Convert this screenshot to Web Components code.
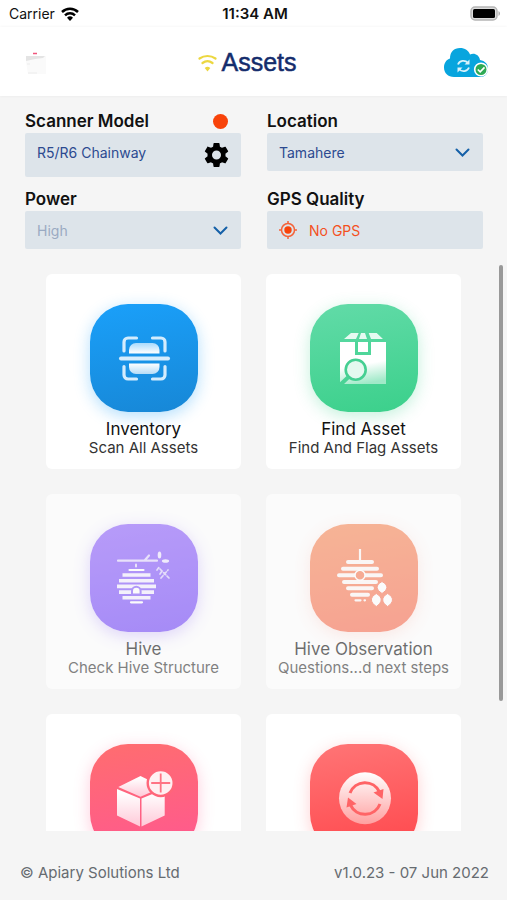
<!DOCTYPE html>
<html lang="en">
<head>
<meta charset="utf-8">
<meta name="viewport" content="width=device-width, initial-scale=1">
<title>Assets</title>
<style>
  html, body {
    height: 100%;
    margin: 0;
  }
  body {
    font-family: Inter, "Liberation Sans", sans-serif;
    color: #111;
    background: #f5f5f5;
    --field: #dde4ea;
    --navy: #2c4a90;
    --alert: #f4511e;
  }
</style>
</head>
<body>
<assets-app>
  <status-bar slot="top" carrier="Carrier" time="11:34 AM"></status-bar>
  <app-header slot="top" heading="Assets"></app-header>

  <scanner-field slot="settings" label="Scanner Model" value="R5/R6 Chainway"></scanner-field>
  <select-field slot="settings" label="Location" options="Tamahere"></select-field>
  <select-field slot="settings" label="Power" options="High,Medium,Low" disabled></select-field>
  <gps-field slot="settings" label="GPS Quality" value="No GPS"></gps-field>

  <menu-tile heading="Inventory" text="Scan All Assets" style="--from:#1aa0fa;--to:#1787d6;--glow:#1aa0fa55">
    <svg viewBox="0 0 108 108">
      <defs>
        <linearGradient id="g-scan" x2="0" y2="1"><stop stop-color="#a9dafc"/><stop offset="1" stop-color="#fff"/></linearGradient>
        <linearGradient id="g-scan2" x2="0" y2="1"><stop stop-color="#fff"/><stop offset="1" stop-color="#b5dcf7"/></linearGradient>
      </defs>
      <g fill="none" stroke="#d3ecfd" stroke-width="3.2" stroke-linecap="round" stroke-linejoin="round">
        <path d="M34 47V38a4 4 0 0 1 4-4h8.500M62.500 34H71a4 4 0 0 1 4 4v9M34 62.500V71a4 4 0 0 0 4 4h8.500M62.500 75H71a4 4 0 0 0 4-4v-8.500"/>
      </g>
      <path fill="url(#g-scan)" d="M39 49.500V46a7 7 0 0 1 7-7h16.500a7 7 0 0 1 7 7v3.500z"/>
      <path fill="url(#g-scan2)" d="M39 59.500h30.500V63a7 7 0 0 1-7 7H46a7 7 0 0 1-7-7z"/>
      <rect x="29" y="52.500" width="51" height="4" rx="2" fill="#d6edfd"/>
    </svg>
  </menu-tile>

  <menu-tile heading="Find Asset" text="Find And Flag Assets" style="--from:#62dba8;--to:#3bd08b;--glow:#3bd08b4d">
    <svg viewBox="0 0 108 108">
      <defs>
        <linearGradient id="g-find" x1="0.300" y1="0" x2="0.500" y2="1"><stop offset="0.550" stop-color="#fff"/><stop offset="1" stop-color="#a0e9c8"/></linearGradient>
      </defs>
      <path fill="#e6faf1" d="M34 35l7-6h7.700l-2.700 6zM49 35l2-6h4l2 6zM61 35l-2.300-6h8l6.300 6z"/>
      <path fill="url(#g-find)" d="M30 38h46v42H30z"/>
      <path fill="none" stroke="#4fd69a" stroke-width="3" d="M46.500 37v12.500h13V37"/>
      <circle cx="45.700" cy="65.700" r="10" fill="#e4f9ef" stroke="#45cf92" stroke-width="2.600"/>
      <path stroke="#4ad295" stroke-width="4" d="M38.500 73l-8.500 8"/>
    </svg>
  </menu-tile>

  <menu-tile heading="Hive" text="Check Hive Structure" disabled style="--from:#8f61fc;--to:#7145f8;--glow:#7145f855">
    <svg viewBox="0 0 108 108">
      <g stroke="#fff" stroke-linecap="round" fill="none">
        <path stroke-width="2.200" opacity=".75" d="M28 36.700h39M55 36l4-4.500"/>
        <path stroke-width="2" d="M46 40.500v2" opacity=".8"/>
        <path stroke-width="2.200" d="M39.500 46h14M41 78.300h11"/>
        <path stroke-width="3.600" stroke-linecap="butt" opacity=".9" d="M32.500 51h28M29 56.700h35M27 62.400h39M29 68.100h35M32.500 73.700h28"/>
        <path stroke-width="1.700" stroke-dasharray="3 2" opacity=".7" d="M67 46l3-4M70 50l2-3M70 45l9 9M71 54l7-8"/>
      </g>
      <path fill="#fff" stroke="#8259fa" stroke-width="2" d="M42 70.500V67a4.300 4.300 0 0 1 8.600 0v3.500z"/>
      <ellipse cx="69.500" cy="31" rx="1.800" ry="3.600" fill="#fff" opacity=".85"/>
      <ellipse cx="75.500" cy="37" rx="3.600" ry="1.800" fill="#fff" opacity=".85"/>
    </svg>
  </menu-tile>

  <menu-tile heading="Hive Observation" text="Questions...d next steps" disabled style="--from:#f88a58;--to:#f86b50;--glow:#f86b5033">
    <svg viewBox="0 0 108 108">
      <g stroke="#fff" fill="none" opacity=".95">
        <path stroke-width="2.200" d="M50 25v12"/>
        <path stroke-width="4" stroke-linecap="round" d="M38 38h24M33 44.700h34M29 51.300h42M34 58h32M38 64.300h24M42 70.700h16"/>
        <path stroke-width="2.200" stroke-linecap="round" d="M45.500 76.300h5M54.500 76.300h.500"/>
      </g>
      <circle cx="50" cy="51.300" r="5" fill="#f87b54" stroke="#fff" stroke-width="1.500"/>
      <g fill="#fff" stroke="#f87052" stroke-width="1">
        <path d="M72 57.500c7 4 6 8 0 12-6-4-7-8 0-12z"/>
        <path d="M66.300 69.500c7 4 6 9 0 13-6-4-7-9 0-13z"/>
        <path d="M77.600 69.500c7 4 6 9 0 13-6-4-7-9 0-13z"/>
      </g>
    </svg>
  </menu-tile>

  <menu-tile aria-label="Add asset" style="--from:#ff6d6f;--to:#ff5890;--glow:#ff58904d">
    <svg viewBox="0 0 108 108">
      <defs>
        <linearGradient id="g-add" x2="0" y2="1"><stop offset="0.100" stop-color="#fff"/><stop offset="1" stop-color="#ffc9d8"/></linearGradient>
      </defs>
      <path fill="url(#g-add)" d="M28.300 43l22.200-11 22.200 11-22.200 9.700z"/>
      <path fill="url(#g-add)" d="M27 45l23 9.600v28L27 71.400zM51.500 54.600l23.200-9.600v26.400l-23.200 11.200z"/>
      <circle cx="70.700" cy="39" r="13" fill="#fff0f2" stroke="#ff6679" stroke-width="2.400"/>
      <path stroke="#ff7484" stroke-width="1.800" d="M70.700 29.500v19M61.200 39h19"/>
    </svg>
  </menu-tile>

  <menu-tile aria-label="Sync" style="--from:#ff7576;--to:#ff474c;--glow:#ff474c40">
    <svg viewBox="0 0 108 108">
      <defs>
        <linearGradient id="g-sync" x2="0" y2="1"><stop stop-color="#fff"/><stop offset="1" stop-color="#ffa0a0"/></linearGradient>
      </defs>
      <circle cx="55" cy="54.300" r="26" fill="url(#g-sync)"/>
      <path fill="none" stroke="#ff6466" stroke-width="3" d="M40 49a16 16 0 0 1 29.500-1M70 60a16 16 0 0 1-29.500 1"/>
      <path fill="#ff6466" d="M63.500 48.500l10-3.500-1 10zM46.500 60l-10 3.500 1.500-10z"/>
    </svg>
  </menu-tile>

  <app-footer slot="bottom"><span>© Apiary Solutions Ltd</span><span>v1.0.23 - 07 Jun 2022</span></app-footer>
</assets-app>

<script>
// clone a template into an open shadow root
function render(host, html) {
  const template = document.createElement("template")
  template.innerHTML = html
  host.attachShadow({ mode: "open" }).appendChild(template.content.cloneNode(true))
}

// label + box styles shared by the settings fields
const fieldStyle = `
  :host {
    display: block;
    min-width: 0;
  }
  .head {
    display: flex;
    align-items: center;
    justify-content: space-between;
    height: 24px;
    font-size: 17px;
    font-weight: 600;
  }
  .box {
    display: flex;
    align-items: center;
    box-sizing: border-box;
    height: 38px;
    padding: 0 12px;
    border-radius: 2px;
    background: var(--field);
    font-size: 14px;
    color: var(--navy);
  }
`

class AssetsApp extends HTMLElement {
  constructor() {
    super()
    render(this, `
      <style>
        :host {
          display: flex;
          flex-direction: column;
          height: 100%;
        }
        .settings {
          display: grid;
          grid-template-columns: 1fr 1fr;
          gap: 10px 26px;
          padding: 13px 24px 16px 25px;
        }
        .menu {
          position: relative;
          flex: 1;
          min-height: 0;
        }
        .scroll {
          box-sizing: border-box;
          height: 100%;
          overflow-y: auto;
          scrollbar-width: none;
          padding: 9px 46px;
        }
        .grid {
          display: grid;
          grid-template-columns: 1fr 1fr;
          gap: 25px;
        }
        .thumb {
          position: absolute;
          top: 0;
          right: 4px;
          width: 4px;
          height: 77%;
          border-radius: 2px;
          background: #999;
        }
      </style>
      <slot name="top"></slot>
      <section class="settings"><slot name="settings"></slot></section>
      <main class="menu">
        <div class="scroll"><div class="grid"><slot></slot></div></div>
        <div class="thumb"></div>
      </main>
      <slot name="bottom"></slot>
    `)
  }

  connectedCallback() {
    const scroll = this.shadowRoot.querySelector(".scroll")
    const thumb = this.shadowRoot.querySelector(".thumb")
    scroll.addEventListener("scroll", () => {
      const range = scroll.scrollHeight - scroll.clientHeight
      const room = scroll.clientHeight - thumb.offsetHeight
      thumb.style.top = Math.round(scroll.scrollTop / range * room) + "px"
    })
  }
}
customElements.define("assets-app", AssetsApp)

class StatusBar extends HTMLElement {
  constructor() {
    super()
    render(this, `
      <style>
        :host {
          display: grid;
          grid-template-columns: 1fr auto 1fr;
          align-items: center;
          height: 27px;
          padding: 0 6px 0 9px;
          background: #fff;
          font-size: 14px;
        }
        .left {
          display: flex;
          align-items: center;
          gap: 6px;
        }
        .time {
          font-size: 15px;
          font-weight: 600;
        }
        .battery {
          justify-self: end;
        }
        svg {
          display: block;
        }
      </style>
      <div class="left">
        <span class="carrier"></span>
        <svg width="18" height="14" viewBox="0 0 18 14">
          <g fill="none" stroke="#000" stroke-width="2.500"><path d="M1 5a11.500 11.500 0 0 1 16 0M4 8.300a7.300 7.300 0 0 1 10 0"/></g>
          <path d="M9 14l-3-3.300a4.500 4.500 0 0 1 6 0z"/>
        </svg>
      </div>
      <span class="time"></span>
      <svg class="battery" width="31" height="15" viewBox="0 0 31 15">
        <rect x="1" y="1" width="26" height="13" rx="4" fill="#ddd" stroke="#b5b5b5" stroke-width="1.500"/>
        <rect x="3" y="3" width="22" height="9" rx="1.500"/>
        <path d="M28.500 5c2 1 2 4 0 5z" fill="#aaa"/>
      </svg>
    `)
  }

  connectedCallback() {
    this.shadowRoot.querySelector(".carrier").textContent = this.getAttribute("carrier")
    this.shadowRoot.querySelector(".time").textContent = this.getAttribute("time")
  }
}
customElements.define("status-bar", StatusBar)

class AppHeader extends HTMLElement {
  constructor() {
    super()
    render(this, `
      <style>
        :host {
          display: grid;
          grid-template-columns: 1fr auto 1fr;
          align-items: center;
          height: 67px;
          padding: 2px 18px 0 24px;
          background: #fff;
          box-shadow: 0 0 3px #0000000f;
        }
        h1 {
          display: flex;
          align-items: center;
          gap: 4px;
          margin: 0 18px 0 0;
          font: 25px "Liberation Sans", Arial, sans-serif;
          color: #142c6c;
          -webkit-text-stroke: 0.5px #142c6c;
        }
        button {
          justify-self: end;
          padding: 0;
          border: 0;
          background: none;
          cursor: pointer;
        }
        svg {
          display: block;
        }
      </style>
      <svg width="24" height="24" viewBox="0 0 24 24">
        <path d="M2 5h20v18H4L2 11z" fill="#fafafa"/>
        <path d="M2 5h19l-2 2-8 1-9 2z" fill="#e4e4e4"/>
        <path d="M3 13h3M4 22h9" stroke="#ececec"/>
        <path d="M9 2.500h4" stroke="#f0567c" stroke-width="1.500"/>
      </svg>
      <h1>
        <svg width="19" height="18" viewBox="0 0 19 18">
          <g fill="none" stroke="#ecd740" stroke-width="2.200" stroke-linecap="round"><path d="M1.500 4.500a14 14 0 0 1 16 0M4.500 9a8.500 8.500 0 0 1 10 0"/></g>
          <path d="M9.500 17.500L6.700 14a4 4 0 0 1 5.600 0z" fill="#ecd740"/>
        </svg>
        <span></span>
      </h1>
      <button aria-label="Sync">
        <svg width="45" height="31" viewBox="0 0 45 31">
          <path fill="#08a5de" d="M10 30C4 30 0 26 0 20.500 0 16 2.500 12.500 6 11.500 6 5 10 1 16 1c5 0 8.500 2.500 10 6.500 4-2 9 0 10 5.500 5 1 8 4 8 8.500 0 5-3 8.500-8 8.500z"/>
          <g fill="none" stroke="#d9f2fb" stroke-width="1.800"><path d="M14 17.500c1.500-4 7-5 10-1.500M25 20.500c-1.500 4-7 5-10 1.500"/></g>
          <path fill="#d9f2fb" d="M25.500 12.500v5h-5zM13.500 25.500v-5h5z"/>
          <circle cx="37" cy="22.500" r="6.300" fill="#2eaa55" stroke="#fff" stroke-width="1.600"/>
          <path fill="none" stroke="#fff" stroke-width="1.600" d="M33.800 22.500l2.400 2.400 4.300-4.500"/>
        </svg>
      </button>
    `)
  }

  connectedCallback() {
    this.shadowRoot.querySelector("h1 span").textContent = this.getAttribute("heading")
  }
}
customElements.define("app-header", AppHeader)

class ScannerField extends HTMLElement {
  constructor() {
    super()
    render(this, `
      <style>
        ${fieldStyle}
        .dot {
          width: 15px;
          height: 15px;
          margin-right: 13px;
          border-radius: 50%;
          background: #f8430a;
        }
        .box {
          height: 44px;
          justify-content: space-between;
        }
        .value {
          padding-bottom: 6px;
        }
        button {
          padding: 0;
          border: 0;
          background: none;
          cursor: pointer;
        }
        svg {
          display: block;
        }
      </style>
      <div class="head"><span class="label"></span><span class="dot"></span></div>
      <div class="box">
        <span class="value"></span>
        <button aria-label="Scanner settings">
          <svg width="25" height="28" viewBox="2 1 20 22">
            <path d="M19.140 12.940c.040-.300.060-.610.060-.940 0-.320-.020-.640-.070-.940l2.030-1.580c.180-.140.230-.410.120-.610l-1.920-3.320c-.120-.220-.370-.290-.590-.220l-2.390.960c-.500-.380-1.030-.700-1.620-.940L14.400 2.810c-.040-.240-.240-.410-.480-.410h-3.840c-.240 0-.430.170-.470.410L9.250 5.350c-.590.240-1.130.570-1.620.940l-2.390-.960c-.220-.080-.470 0-.590.220L2.740 8.870c-.120.210-.080.470.120.610l2.030 1.580c-.050.300-.090.630-.090.940s.020.640.070.940l-2.030 1.580c-.180.140-.230.410-.120.610l1.920 3.320c.120.220.370.290.590.220l2.390-.960c.500.380 1.030.700 1.620.940l.360 2.540c.050.240.240.410.480.410h3.840c.240 0 .440-.170.470-.410l.360-2.540c.590-.240 1.130-.560 1.620-.940l2.390.960c.220.080.470 0 .590-.220l1.920-3.320c.120-.220.070-.470-.120-.610zM12 15.600A3.600 3.600 0 1 1 12 8.400a3.600 3.600 0 0 1 0 7.200z"/>
          </svg>
        </button>
      </div>
    `)
  }

  connectedCallback() {
    this.shadowRoot.querySelector(".label").textContent = this.getAttribute("label")
    this.shadowRoot.querySelector(".value").textContent = this.getAttribute("value")
  }
}
customElements.define("scanner-field", ScannerField)

class SelectField extends HTMLElement {
  constructor() {
    super()
    render(this, `
      <style>
        ${fieldStyle}
        .wrap {
          display: grid;
          align-items: center;
        }
        select, svg {
          grid-area: 1 / 1;
        }
        select.box {
          width: 100%;
          border: 0;
          appearance: none;
          font-family: inherit;
          opacity: 1;
        }
        select:disabled {
          color: #9aaac2;
        }
        svg {
          justify-self: end;
          margin-right: 13px;
          pointer-events: none;
        }
      </style>
      <label class="head" for="choice"></label>
      <div class="wrap">
        <select class="box" id="choice"></select>
        <svg width="15" height="9" viewBox="0 0 15 9"><path d="M1.500 1.500l6 6 6-6" fill="none" stroke="#1560a8" stroke-width="2" stroke-linecap="round"/></svg>
      </div>
    `)
  }

  connectedCallback() {
    const select = this.shadowRoot.querySelector("select")
    this.shadowRoot.querySelector("label").textContent = this.getAttribute("label")
    this.getAttribute("options").split(",").forEach((name) => select.add(new Option(name)))
    select.disabled = this.hasAttribute("disabled")
  }
}
customElements.define("select-field", SelectField)

class GpsField extends HTMLElement {
  constructor() {
    super()
    render(this, `
      <style>
        ${fieldStyle}
        .box {
          gap: 12px;
          color: var(--alert);
        }
      </style>
      <div class="head"></div>
      <div class="box">
        <svg width="18" height="18" viewBox="0 0 18 18">
          <g fill="none" stroke="#f4633a" stroke-width="1.500"><circle cx="9" cy="9" r="6.500"/><path d="M9 0v3M9 15v3M0 9h3M15 9h3"/></g>
          <circle cx="9" cy="9" r="3.700" fill="#f8430a"/>
        </svg>
        <span></span>
      </div>
    `)
  }

  connectedCallback() {
    this.shadowRoot.querySelector(".head").textContent = this.getAttribute("label")
    this.shadowRoot.querySelector("span").textContent = this.getAttribute("value")
  }
}
customElements.define("gps-field", GpsField)

class MenuTile extends HTMLElement {
  constructor() {
    super()
    render(this, `
      <style>
        :host {
          display: block;
          min-width: 0;
        }
        button {
          display: flex;
          flex-direction: column;
          align-items: center;
          box-sizing: border-box;
          width: 100%;
          height: 195px;
          padding: 30px 0 0;
          border: 0;
          border-radius: 6px;
          background: #fff;
          color: #111;
          font-family: inherit;
          cursor: pointer;
        }
        button:disabled {
          opacity: 0.6;
          cursor: default;
        }
        .icon {
          width: 108px;
          height: 108px;
          margin-bottom: 6px;
          border-radius: 38px;
          background: linear-gradient(170deg, var(--from), var(--to));
          box-shadow: 0 4px 16px var(--glow);
        }
        .heading {
          font-size: 17px;
          line-height: 22px;
        }
        .text {
          font-size: 15px;
          line-height: 16px;
          color: #333;
          white-space: nowrap;
        }
      </style>
      <button>
        <span class="icon"><slot></slot></span>
        <span class="heading"></span>
        <span class="text"></span>
      </button>
    `)
  }

  connectedCallback() {
    const button = this.shadowRoot.querySelector("button")
    this.shadowRoot.querySelector(".heading").textContent = this.getAttribute("heading")
    this.shadowRoot.querySelector(".text").textContent = this.getAttribute("text")
    button.disabled = this.hasAttribute("disabled")
    if (this.hasAttribute("aria-label")) {
      button.setAttribute("aria-label", this.getAttribute("aria-label"))
    }
  }
}
customElements.define("menu-tile", MenuTile)

class AppFooter extends HTMLElement {
  constructor() {
    super()
    render(this, `
      <style>
        :host {
          display: flex;
          align-items: center;
          justify-content: space-between;
          height: 55px;
          padding: 14px 18px 0 20px;
          font-size: 15px;
          color: #666b70;
        }
      </style>
      <slot></slot>
    `)
  }
}
customElements.define("app-footer", AppFooter)
</script>
</body>
</html>
